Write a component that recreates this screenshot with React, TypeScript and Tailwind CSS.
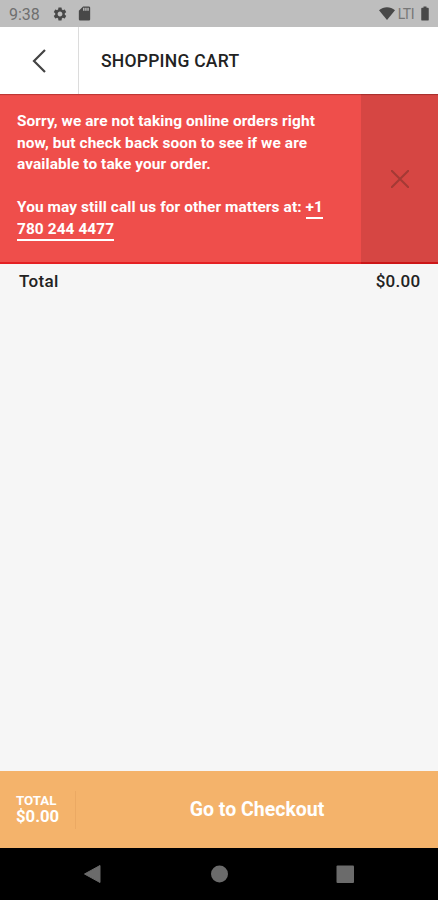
import React from 'react';
import { MdBatteryFull, MdSdCard, MdSettings } from 'react-icons/md';

interface BannerProps {
  phone: string[];
}

const StatusBar: React.FC = () => (
  <div className="flex h-[27px] shrink-0 items-center bg-[#bebebe] pl-[9px] pr-[4px] text-[#484848]">
    <span className="w-[43px] pt-[2px] text-[16px] leading-none text-[#6f6f6f]">9:38</span>
    <MdSettings className="size-4" />
    <MdSdCard className="ml-[8px] size-[17px]" />
    <svg className="ml-auto h-[13px] w-4" viewBox="0 0 16 13" fill="currentColor">
      <path d="M0 3.3C4.6-.9 11.4-.9 16 3.3L8 13z" />
    </svg>
    <span className="ml-[3px] whitespace-nowrap pt-px text-[14px] leading-none tracking-[-0.5px] text-[#777]">
      LTI
    </span>
    <MdBatteryFull className="ml-[2px] h-[17px] w-[18px]" preserveAspectRatio="none" />
  </div>
);

const Header: React.FC = () => (
  <header className="flex h-[67px] shrink-0 items-stretch bg-white">
    <button className="flex w-[79px] items-center justify-center border-r border-[#dcdcdc]">
      <svg className="h-6 w-[14px]" viewBox="0 0 14 24" fill="none" stroke="#444" strokeWidth="2.2">
        <path d="M13 1L2 12l11 11" />
      </svg>
    </button>
    <h1 className="flex items-center pl-[22px] pt-[2px] text-[17.5px] font-medium tracking-[0.24px] text-[#222]">
      SHOPPING CART
    </h1>
  </header>
);

const Banner: React.FC<BannerProps> = ({ phone }) => (
  <section className="flex h-[170px] shrink-0 bg-[#ef4e4b] shadow-[inset_0_2px_1px_-1px_#b93634]">
    <div className="w-[361px] border-b-2 border-[#e42023] pl-[17px] pt-[17px] text-[15.4px] font-bold leading-[21.5px] tracking-[0.1px] text-white">
      <p>
        Sorry, we are not taking online orders right
        <br />
        now, but check back soon to see if we are
        <br />
        available to take your order.
      </p>
      <p className="mt-[21.5px]">
        You may still call us for other matters at:{' '}
        <span className="inline-block h-[22px] border-b-2 border-white">{phone[0]}</span>
        <br />
        <span className="inline-block h-[22px] border-b-2 border-white">{phone[1]}</span>
      </p>
    </div>
    <button className="flex flex-1 items-center justify-center border-b-2 border-[#cc1618] bg-black/10 pt-[2px]">
      <svg className="size-[18px]" viewBox="0 0 18 18" fill="none" stroke="#a43a35" strokeWidth="2">
        <path d="M0 0l18 18M18 0L0 18" />
      </svg>
    </button>
  </section>
);

const CheckoutBar: React.FC = () => (
  <footer className="flex h-[77px] shrink-0 items-center bg-[#f4b36b] text-white">
    <div className="flex h-[38px] w-[76px] flex-col justify-center border-r border-[#eba963] pb-[2px] pl-4 font-bold">
      <span className="text-[13.3px] leading-[15px]">TOTAL</span>
      <span className="text-[16.7px] leading-[17px]">$0.00</span>
    </div>
    <button className="flex-1 text-[19.5px] font-bold">Go to Checkout</button>
  </footer>
);

const NavBar: React.FC = () => (
  <nav className="h-[52px] shrink-0 bg-black">
    <svg className="h-[52px] w-[438px]" viewBox="0 1 438 52" fill="#6b6b6b">
      <path d="M84.5 27L100 18.5v17z" stroke="#6b6b6b" strokeLinejoin="round" />
      <circle cx="219.5" cy="27" r="8.5" />
      <rect x="336.5" y="18.5" width="17.5" height="17.5" rx="1" />
    </svg>
  </nav>
);

export default function App() {
  return (
    <div className="flex h-[900px] w-[438px] flex-col overflow-hidden bg-[#f6f6f6] font-['Roboto',sans-serif]">
      <StatusBar />
      <Header />
      <Banner phone={['+1', '780 244 4477']} />
      <main className="flex-1">
        <div className="flex justify-between pl-[19px] pr-[17.5px] pt-[5px] text-[17px] font-medium leading-6 tracking-[0.3px] text-[#222]">
          <span>Total</span>
          <span>$0.00</span>
        </div>
      </main>
      <CheckoutBar />
      <NavBar />
    </div>
  );
}
